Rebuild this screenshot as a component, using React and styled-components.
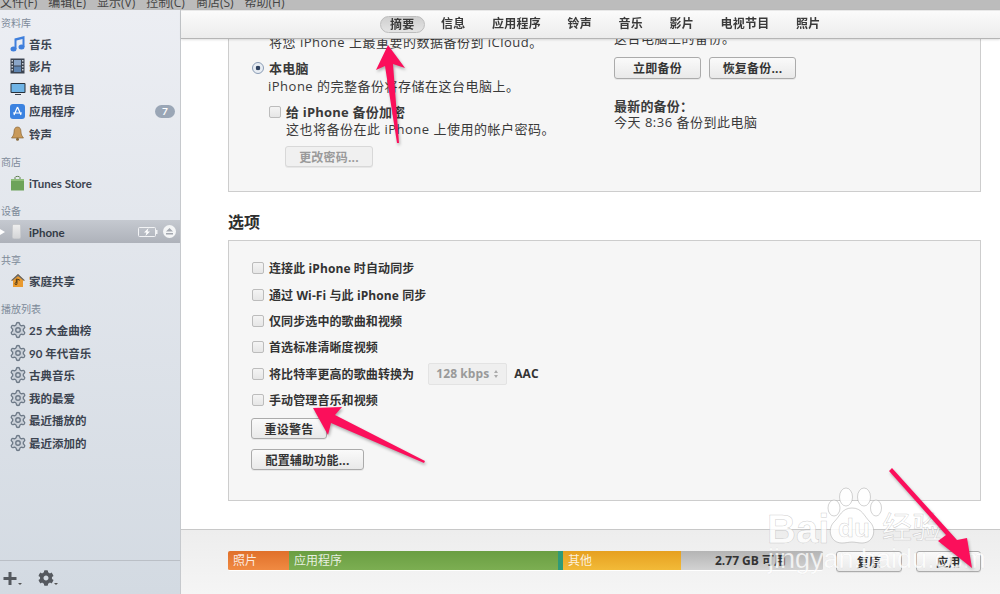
import React from 'react';
import styled, { createGlobalStyle } from 'styled-components';
import { FaCog } from 'react-icons/fa';
import { Settings } from 'lucide-react';

const Global = createGlobalStyle`
  html, body { margin: 0; padding: 0; height: 100%; background: #fff; }
  #root { height: 100%; }
  * { box-sizing: border-box; }
`;
const Page = styled.div`
  position: relative; width: 1000px; height: 594px; overflow: hidden;
  display: flex; flex-direction: column; filter: blur(.35px);
  font-family: "Open Sans", "Noto Sans CJK SC", sans-serif; color: #333; font-size: 13px;
`;
const MenuBar = styled.div`
  height: 10px; flex: none; background: #bcbcbc; display: flex; align-items: flex-end; overflow: hidden;
  gap: 11px; font-size: 12px; line-height: 14px; color: #444;
`;
const MenuItem = styled.span` flex: none; `;
const Shell = styled.div` flex: 1; display: flex; min-height: 0; `;
const Sidebar = styled.aside`
  width: 181px; flex: none; display: flex; flex-direction: column; padding-top: 1.5px;
  background: linear-gradient(#eceef3, #d3dae2); border-right: 1px solid #c6c9cd;
  font-family: Lato, "Noto Sans CJK SC", sans-serif;
`;
const Groups = styled.div` flex: 1; `;
const Group = styled.div` margin-top: ${p => p.$mt || 0}px; `;
const GroupLabel = styled.div`
  height: 21px; line-height: 21px; padding: 1px 0 0 1px; font-size: 10px; color: #7d8a99;
`;
const Item = styled.div`
  height: 22.5px; display: flex; align-items: center; padding-left: 10px; gap: 4px;
  font-size: 11.5px; font-weight: 700; color: #3c4450; white-space: pre;
`;
const IconBox = styled.span`
  width: 15px; height: 15px; flex: none; display: flex; align-items: center; justify-content: center;
  & svg { display: block; flex: none; }
`;
const Count = styled.span`
  margin-left: auto; margin-right: 5px; width: 20px; height: 13px; border-radius: 7px; background: #9aa6b6;
  color: #fff; font-size: 10px; line-height: 13px; text-align: center; font-weight: 700;
`;
const DeviceRow = styled.div`
  height: 23px; margin-top: -1px; display: flex; align-items: center;
  background: linear-gradient(#c5c9d0, #aeb2ba); font-size: 11.5px; font-weight: 700; color: #333b46;
`;
const Disclosure = styled.span`
  width: 0; height: 0; border-left: 5px solid #fff; border-top: 3.5px solid transparent; border-bottom: 3.5px solid transparent;
  margin-right: 7px;
`;
const PhoneShape = styled.span`
  width: 9px; height: 15px; border-radius: 1.5px; background: linear-gradient(#eee, #d5d6d8); border: 1px solid #c9cbce; margin-right: 8px;
`;
const DeviceName = styled.span` flex: 1; padding-top: 1px; `;
const DeviceIcons = styled.span` display: flex; align-items: center; gap: 5px; padding-right: 4px; `;
const SideFooter = styled.div`
  height: 34px; flex: none; border-top: 1px solid #babfc6; display: flex; align-items: center; padding-left: 3px; gap: 16px; padding-top: 1px;
`;
const FootIcon = styled.span` display: flex; align-items: flex-end; color: #55595f; `;
const Caret = styled.i`
  width: 0; height: 0; border-top: 2px solid #555; border-left: 2px solid transparent; border-right: 2px solid transparent; margin-bottom: 1px;
`;

const Main = styled.main` flex: 1; min-width: 0; display: flex; flex-direction: column; background: #fff; `;
const Tabs = styled.nav`
  position: relative; z-index: 2; height: 29px; flex: none; display: flex; align-items: center; gap: 6.5px; padding: 0 0 1px 199px;
  background: linear-gradient(#fbfbfb, #ececec); border-bottom: 1px solid #b5b5b5; box-shadow: 0 1px 2px rgba(0,0,0,.12);
  border-top: 1px solid #e8e8e8;
`;
const Tab = styled.span`
  height: 17px; line-height: 16px; padding: 0 10px; border-radius: 9px; font-size: 12px; font-weight: 700; letter-spacing: .25px; color: #3a3a3a;
  ${p => p.$active && 'background: linear-gradient(#cfcfcf, #e4e4e4); border: 1px solid #bdbdbd; padding: 0 9px;'}
`;
const Body = styled.div` flex: 1; min-height: 0; overflow: hidden; padding-left: 47px; `;
const Panel = styled.section`
  width: 753px; background: #f6f6f6; border: 1px solid #cdcdcd;
`;
const BackupPanel = styled(Panel)`
  margin-top: -21px; height: 174px; display: grid; grid-template-columns: 362px 1fr; padding: 15px 0 0 23px;
`;
const Col = styled.div` display: flex; flex-direction: column; align-items: flex-start; `;
const RightCol = styled(Col)` margin-top: -5px; `;
const Line = styled.div`
  height: 18px; line-height: 18px; white-space: pre; font-size: 13px; letter-spacing: .5px; color: #3a3a3a;
  margin-top: ${p => p.$mt || 0}px; margin-left: ${p => p.$ml || 0}px;
  ${p => p.$bold && 'font-weight: 700; letter-spacing: .2px;'}
`;
const CheckRow = styled.div`
  display: flex; align-items: center; gap: 5px; height: ${p => p.$h || 18}px;
  margin-top: ${p => p.$mt || 0}px; margin-left: ${p => p.$ml || 0}px; white-space: pre;
  font-size: 12px; font-weight: 700; letter-spacing: .1px; color: #333;
`;
const Check = styled.span`
  width: 12px; height: 12px; flex: none; border-radius: 2px; border: 1px solid #bcbcbc; background: linear-gradient(#f4f4f4, #e6e6e6);
`;
const Radio = styled.span`
  width: 12px; height: 12px; flex: none; border-radius: 50%; border: 1px solid #8a9cb5; background: radial-gradient(circle, #2f4260 0 2px, #e8edf3 2.6px);
`;
const Button = styled.button`
  display: block; font: inherit; font-size: 12px; font-weight: 700; letter-spacing: .2px; padding: 0; color: ${p => p.$disabled ? '#9a9a9a' : '#333'};
  width: ${p => p.$w}px; height: ${p => p.$h || 21}px; border-radius: 3px;
  margin-top: ${p => p.$mt || 0}px; margin-left: ${p => p.$ml || 0}px;
  border: 1px solid ${p => p.$disabled ? '#d8d8d8' : '#ababab'};
  background: ${p => p.$disabled ? '#f0f0f0' : 'linear-gradient(#fafafa, #e9e9e9)'};
  box-shadow: 0 1px 0 rgba(0,0,0,.06);
`;
const ButtonRow = styled.div` display: flex; gap: 8px; margin-top: 10px; `;
const Heading = styled.h2`
  margin: 19px 0 7px; height: 22px; line-height: 22px; font-size: 16px; font-weight: 700; color: #2e2e2e;
`;
const OptionsPanel = styled(Panel)` height: 261px; padding: 14px 0 0 23px; `;
const Select = styled.span`
  margin-left: 9px; width: 79px; height: 22px; border: 1px solid #e3e3e3; border-radius: 2px; background: #efefef; color: #9a9a9a; display: flex; align-items: center;
  padding-left: 7px; gap: 5px; font-size: 12px;
`;
const Updown = styled.span`
  display: flex; flex-direction: column; gap: 2px;
  &::before { content: ""; border-bottom: 3px solid #aaa; border-left: 2.5px solid transparent; border-right: 2.5px solid transparent; }
  &::after { content: ""; border-top: 3px solid #aaa; border-left: 2.5px solid transparent; border-right: 2.5px solid transparent; }
`;
const Aac = styled.span` margin-left: 2px; `;
const Footer = styled.footer`
  height: 65px; flex: none; display: flex; align-items: flex-start; padding: 21px 0 0 47px;
  border-top: 1px solid #c8c8c8; background: linear-gradient(#ededed, #f5f5f5);
`;
const Bar = styled.div`
  width: 595px; height: 20px; display: flex; border-radius: 2px; overflow: hidden; font-size: 12px; color: rgba(255,255,255,.85);
  border-bottom: 1px solid #fff;
`;
const Segment = styled.div`
  width: ${p => p.$w}px; line-height: 19px; padding-left: 5px; background: ${p => p.$bg}; white-space: pre;
  ${p => p.$free && 'color:#333; font-weight:700; padding-left: 34px;'}
`;
const FooterButtons = styled.div` display: flex; gap: 14px; margin-left: 13px; `;

const Overlay = styled.svg`
  position: absolute; left: 0; top: 0; z-index: 5; pointer-events: none;
  filter: drop-shadow(1px 2px 1.5px rgba(0,0,0,.3));
`;
const Mark = styled.div`
  position: absolute; z-index: 4; left: ${p => p.$x}px; top: ${p => p.$y}px; font-size: ${p => p.$s}px; line-height: 1; white-space: nowrap; pointer-events: none;
  font-family: "Liberation Sans", "Noto Sans CJK SC", sans-serif; font-weight: ${p => p.$w || 400};
  color: rgba(255,255,255,.8); -webkit-text-stroke: .5px rgba(130,130,130,${p => p.$soft ? '.12' : '.4'});
`;
const Paw = styled.svg` position: absolute; z-index: 3; left: 826px; top: 486px; pointer-events: none; `;

const Note = () => <svg width="15" height="16" viewBox="0 0 15 16"><ellipse cx="3.500" cy="13" rx="3" ry="2.500" fill="#3f7fdc"/><ellipse cx="11.500" cy="11" rx="3" ry="2.500" fill="#3f7fdc"/><path d="M4.500 13V2.500L14.500 0v11h-2V3L6.500 4.500V13z" fill="#3f7fdc"/></svg>;
const Film = () => <svg width="15" height="16" viewBox="0 0 15 16"><rect x="0.5" y="0.5" width="14" height="15" fill="#3c4552"/><rect x="4" y="2" width="7" height="5.500" fill="#8ba6c8"/><rect x="4" y="8.500" width="7" height="5.500" fill="#5f84b0"/><path d="M1.500 2h1.500v1.500H1.500zM1.500 5h1.500v1.500H1.500zM1.500 8h1.500v1.500H1.500zM1.500 11h1.500v1.500H1.500zM12 2h1.500v1.500H12zM12 5h1.500v1.500H12zM12 8h1.500v1.500H12zM12 11h1.500v1.500H12z" fill="#c9ced6"/></svg>;
const Tv = () => <svg width="16" height="14" viewBox="0 0 16 14"><rect x="0.5" y="1" width="15" height="10" rx="1" fill="#28313b"/><rect x="1.500" y="2" width="13" height="8" fill="#6fb4e6"/><path d="M5 12h6v1H5z" fill="#39424d"/></svg>;
const AppIcon = () => <svg width="15" height="15" viewBox="0 0 15 15"><rect width="15" height="15" rx="3" fill="#3b82e0"/><path d="M7.500 3 4 11M7.500 3l3.500 8M3 9h9" stroke="#fff" strokeWidth="1.2" fill="none"/></svg>;
const Bell = () => <svg width="15" height="15" viewBox="0 0 15 15"><path d="M7.500 1C5 1 4 3 4 6c0 3-1.500 4.500-2.500 6h12C12.500 10.500 11 9 11 6c0-3-1-5-3.500-5z" fill="#c99a5a" stroke="#7d5a2e" strokeWidth=".6"/><circle cx="7.500" cy="13.300" r="1.500" fill="#8a6a3a"/></svg>;
const Bag = () => <svg width="15" height="16" viewBox="0 0 15 16"><path d="M1 4h13v11.500H1z" fill="#6da35a"/><path d="M1 4h13v2H1z" fill="#8fbe7a"/><path d="M5 4V2.500C5 1 10 1 10 2.500V4" stroke="#5e7d4e" fill="none"/></svg>;
const House = () => <svg width="14" height="13" viewBox="0 0 14 13"><path d="M7 0 0 6.500h2V13h10V6.500h2z" fill="#e99a2f"/><path d="M7 0 0 6.500h1.500L7 2l5.500 4.500H14z" fill="#5d6672"/><path d="M6 5.500v4a1 1 0 1 1-.7-.8V5l3 .7v1" stroke="#3a2c14" strokeWidth=".8" fill="none"/></svg>;
const Gear = () => <Settings size={18} strokeWidth={1.8} color="#6e7a88" fill="#ccd2da" />;
const Battery = () => <svg width="20" height="10" viewBox="0 0 20 10"><rect x=".5" y=".5" width="17" height="9" rx="1" fill="none" stroke="#f2f3f5"/><rect x="18" y="3" width="1.500" height="4" fill="#f2f3f5"/><path d="M10.500 1 6 5.500h2.500L7.500 9l4.500-4.500H9.500z" fill="#fff"/></svg>;
const Eject = () => <svg width="13" height="13" viewBox="0 0 13 13"><circle cx="6.500" cy="6.500" r="6.500" fill="#f4f5f6"/><path d="M6.500 3 10 6.500H3zM3 8h7v1.500H3z" fill="#a4a8af"/></svg>;

const library = [[Note, '音乐'], [Film, '影片'], [Tv, '电视节目'], [AppIcon, '应用程序', 7], [Bell, '铃声']];
const playlists = ['25 大金曲榜', '90 年代音乐', '古典音乐', '我的最爱', '最近播放的', '最近添加的'];
const tabs = ['摘要', '信息', '应用程序', '铃声', '音乐', '影片', '电视节目', '照片'];
const options = ['连接此 iPhone 时自动同步', '通过 Wi-Fi 与此 iPhone 同步', '仅同步选中的歌曲和视频', '首选标准清晰度视频'];

export default function App() {
  return (
    <Page>
      <Global />
      <MenuBar>
        {['文件(F)', '编辑(E)', '显示(V)', '控制(C)', '商店(S)', '帮助(H)'].map(m => <MenuItem key={m}>{m}</MenuItem>)}
      </MenuBar>
      <Shell>
        <Sidebar>
          <Groups>
            <Group>
              <GroupLabel>资料库</GroupLabel>
              {library.map(([I, t, c]) => <Item key={t}><IconBox><I /></IconBox>{t}{c && <Count>{c}</Count>}</Item>)}
            </Group>
            <Group $mt={6}>
              <GroupLabel>商店</GroupLabel>
              <Item><IconBox><Bag /></IconBox>iTunes Store</Item>
            </Group>
            <Group $mt={5.5}>
              <GroupLabel>设备</GroupLabel>
              <DeviceRow>
                <Disclosure />
                <PhoneShape />
                <DeviceName>iPhone</DeviceName>
                <DeviceIcons><Battery /><Eject /></DeviceIcons>
              </DeviceRow>
            </Group>
            <Group $mt={5.5}>
              <GroupLabel>共享</GroupLabel>
              <Item><IconBox><House /></IconBox>家庭共享</Item>
            </Group>
            <Group $mt={6}>
              <GroupLabel>播放列表</GroupLabel>
              {playlists.map(t => <Item key={t}><IconBox><Gear /></IconBox>{t}</Item>)}
            </Group>
          </Groups>
          <SideFooter>
            <FootIcon><svg width="15" height="15" viewBox="0 0 15 15"><path d="M5.500 1h3v5h5v3h-5v5h-3V9h-5V6h5z" fill="#55595f"/></svg><Caret /></FootIcon>
            <FootIcon><FaCog size={16} /><Caret /></FootIcon>
          </SideFooter>
        </Sidebar>
        <Main>
          <Tabs>
            {tabs.map((t, i) => <Tab key={t} $active={i === 0}>{t}</Tab>)}
          </Tabs>
          <Body>
            <BackupPanel>
              <Col>
                <Line $mt={-1} $ml={17}>将您 iPhone 上最重要的数据备份到 iCloud。</Line>
                <CheckRow $mt={8}><Radio /><Line $bold>本电脑</Line></CheckRow>
                <Line $ml={16}>iPhone 的完整备份将存储在这台电脑上。</Line>
                <CheckRow $mt={8} $ml={17}><Check /><Line $bold>给 iPhone 备份加密</Line></CheckRow>
                <Line $mt={-1} $ml={34}>这也将备份在此 iPhone 上使用的帐户密码。</Line>
                <Button $mt={8} $ml={33} $w={88} $disabled>更改密码...</Button>
              </Col>
              <RightCol>
                <Line>这台电脑上的备份。</Line>
                <ButtonRow><Button $w={87} $h={22}>立即备份</Button><Button $w={87} $h={22}>恢复备份...</Button></ButtonRow>
                <Line $mt={18} $bold>最新的备份：</Line>
                <Line $mt={-2}>今天 8:36 备份到此电脑</Line>
              </RightCol>
            </BackupPanel>
            <Heading>选项</Heading>
            <OptionsPanel>
              {options.map(o => <CheckRow key={o} $h={26.4}><Check />{o}</CheckRow>)}
              <CheckRow $h={26.4}><Check />将比特率更高的歌曲转换为<Select>128 kbps<Updown /></Select><Aac>AAC</Aac></CheckRow>
              <CheckRow $h={26.4}><Check />手动管理音乐和视频</CheckRow>
              <Button $mt={5} $ml={-1} $w={76}>重设警告</Button>
              <Button $mt={10} $ml={-1} $w={113}>配置辅助功能...</Button>
            </OptionsPanel>
          </Body>
          <Footer>
            <Bar>
              <Segment $w={61} $bg="linear-gradient(#e0702a,#f08a42)">照片</Segment>
              <Segment $w={269} $bg="linear-gradient(#6a9e42,#7cae52)">应用程序</Segment>
              <Segment $w={5} $bg="#2f9a78" />
              <Segment $w={118} $bg="linear-gradient(#e6a020,#f2ba38)">其他</Segment>
              <Segment $w={142} $free $bg="linear-gradient(#b4b4b4,#d2d2d2)">2.77 GB 可用</Segment>
            </Bar>
            <FooterButtons>
              <Button $w={66} $h={21}>复原</Button>
              <Button $w={65} $h={21}>应用</Button>
            </FooterButtons>
          </Footer>
        </Main>
      </Shell>
      <Paw width="56" height="60" viewBox="0 0 56 60" fill="rgba(255,255,255,.85)" stroke="rgba(130,130,130,.35)">
        <ellipse cx="8" cy="22" rx="6" ry="8" />
        <ellipse cx="20" cy="11" rx="6.500" ry="9" />
        <ellipse cx="38" cy="11" rx="6.500" ry="9" />
        <ellipse cx="50" cy="22" rx="5.500" ry="8" />
        <path d="M26 22c-10 0-12 8-18 14-7 7-4 21 8 21 4 0 7-1 10-1s6 1 10 1c12 0 15-14 8-21-6-6-8-14-18-14z" />
      </Paw>
      <Mark $x={767} $y={509} $s={40} $w={700}>Bai</Mark>
      <Mark $x={838} $y={515} $s={26} $w={700}>du</Mark>
      <Mark $x={882} $y={513} $s={30}>经验</Mark>
      <Mark $x={768} $y={546} $s={27} $soft>jingyan.baidu.com</Mark>
      <Overlay width="1000" height="594" viewBox="0 0 1000 594">
        <path d="M388 45 405 68 393 64 399 143 397 143 385 66 376 70Z" fill="#fb0f5b" />
        <path d="M313 408 342 407 335 415 425 461 424 463 331 423 328 435Z" fill="#fb0f5b" />
        <path d="M889 471 892 468 957 540 967 538 972 568 938 541 946 535Z" fill="#fb0f5b" />
      </Overlay>
    </Page>
  );
}
